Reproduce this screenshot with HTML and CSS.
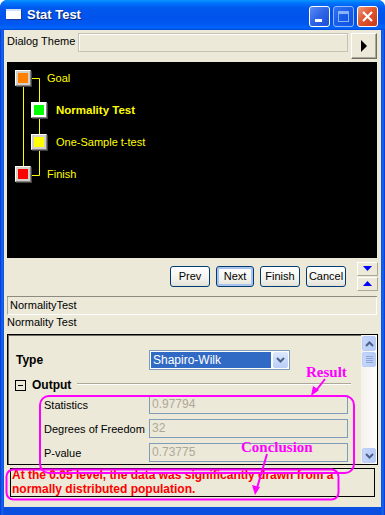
FILE: index.html
```html
<!DOCTYPE html>
<html lang="en">
<head>
    <meta charset="UTF-8">
    <title>Stat Test</title>
    <link rel="stylesheet" href="styles.css">
</head>
<body>
    <div class="window">
        <!-- title bar -->
        <div class="titlebar">
            <span class="app-icon"></span>
            <span class="title">Stat Test</span>
            <div class="caption-btns">
                <span class="cap cap-min"><i></i></span>
                <span class="cap cap-max"><i></i></span>
                <span class="cap cap-close">
                    <svg width="13" height="13" viewBox="0 0 13 13"><path d="M2 2 L11 11 M11 2 L2 11" stroke="#fff" stroke-width="2.2"/></svg>
                </span>
            </div>
        </div>

        <div class="client">
            <div class="theme-row">
                <span class="theme-label">Dialog Theme</span>
                <span class="theme-field"></span>
                <span class="theme-btn">
                    <svg width="8" height="12" viewBox="0 0 8 12"><path d="M1 0 L7 6 L1 12 Z" fill="#000"/></svg>
                </span>
            </div>

            <!-- wizard map -->
            <div class="map">
                <svg class="map-lines" width="370" height="196">
                    <path d="M16.5 24 V104 M24 16.5 H32.5 V40 M32.5 55 V72 M32.5 87 V113.5 H24" stroke="#ffff00" fill="none"/>
                </svg>
                <div class="node" style="left:8px;top:8px"><i class="orange"></i></div>
                <div class="node selected" style="left:24px;top:40px"><i class="green"></i></div>
                <div class="node" style="left:24px;top:72px"><i class="yellow"></i></div>
                <div class="node" style="left:8px;top:104px"><i class="red"></i></div>
                <span class="node-label" style="left:40px;top:9px">Goal</span>
                <span class="node-label bold" style="left:49px;top:41px">Normality Test</span>
                <span class="node-label" style="left:49px;top:73px">One-Sample t-test</span>
                <span class="node-label" style="left:40px;top:105px">Finish</span>
            </div>

            <div class="nav-row">
                <button class="btn">Prev</button>
                <button class="btn focus">Next</button>
                <button class="btn">Finish</button>
                <button class="btn">Cancel</button>
                <div class="spin">
                    <span class="spin-btn"><svg width="9" height="5" viewBox="0 0 9 5"><path d="M0 0 H9 L4.5 5 Z" fill="#0000ff"/></svg></span>
                    <span class="spin-btn"><svg width="9" height="5" viewBox="0 0 9 5"><path d="M0 5 H9 L4.5 0 Z" fill="#0000ff"/></svg></span>
                </div>
            </div>

            <div class="separator"></div>
            <div class="name-field">NormalityTest</div>
            <div class="name-label">Normality Test</div>

            <div class="settings">
                <div class="settings-body">
                    <div class="type-row">
                        <span class="type-label">Type</span>
                        <span class="combo">
                            <span class="combo-value">Shapiro-Wilk</span>
                            <span class="combo-btn">
                                <svg width="9" height="6" viewBox="0 0 9 6"><path d="M1 1 L4.5 4.5 L8 1" stroke="#4d6185" stroke-width="2" fill="none"/></svg>
                            </span>
                        </span>
                    </div>
                    <div class="output-row">
                        <span class="minus-box"></span>
                        <span class="output-label">Output</span>
                        <span class="output-line"></span>
                    </div>
                    <div class="result-row">
                        <span class="result-label">Statistics</span>
                        <span class="result-field">0.97794</span>
                    </div>
                    <div class="result-row">
                        <span class="result-label">Degrees of Freedom</span>
                        <span class="result-field">32</span>
                    </div>
                    <div class="result-row">
                        <span class="result-label">P-value</span>
                        <span class="result-field">0.73775</span>
                    </div>
                </div>
                <div class="scrollbar">
                    <span class="sb-btn">
                        <svg width="9" height="6" viewBox="0 0 9 6"><path d="M1 5 L4.5 1.5 L8 5" stroke="#4d6185" stroke-width="2" fill="none"/></svg>
                    </span>
                    <span class="sb-thumb">
                        <svg width="7" height="7" viewBox="0 0 7 7"><path d="M0 0.5 H7 M0 2.5 H7 M0 4.5 H7 M0 6.5 H7" stroke="#8ea5d8"/></svg>
                    </span>
                    <span class="sb-fill"></span>
                    <span class="sb-btn">
                        <svg width="9" height="6" viewBox="0 0 9 6"><path d="M1 1 L4.5 4.5 L8 1" stroke="#4d6185" stroke-width="2" fill="none"/></svg>
                    </span>
                </div>
            </div>

            <div class="conclusion">At the 0.05 level, the data was significantly drawn from a<br>normally distributed population.</div>

            <!-- annotations drawn over the dialog -->
            <svg class="marks" width="377" height="477">
                <rect x="36" y="366" width="314" height="77" rx="9" fill="none" stroke="#ff00ff" stroke-width="2"/>
                <rect x="2.5" y="439.5" width="332" height="30" rx="7" fill="none" stroke="#ff00ff" stroke-width="2"/>
                <path d="M321 349 L311 362" stroke="#ff00ff" stroke-width="2"/>
                <path d="M307 366 L309 356 L315 360 Z" fill="#ff00ff"/>
                <path d="M263 424 L253 458" stroke="#ff00ff" stroke-width="2"/>
                <path d="M251 465 L248 455 L256 457 Z" fill="#ff00ff"/>
            </svg>
            <span class="note note-result">Result</span>
            <span class="note note-conclusion">Conclusion</span>
        </div>
    </div>
</body>
</html>
```

FILE: styles.css
```css
body {
    margin: 0;
    font-family: "Liberation Sans", Arial, sans-serif;
    font-size: 11px;
    color: #000;
}

.window {
    width: 385px;
    height: 515px;
    background: linear-gradient(to right, #0831d9 0, #166aee 2px, #0a4fe0 4px, #0a4fe0 381px, #166aee 383px, #0831d9 385px);
    border-radius: 7px 7px 0 0;
    display: flex;
    flex-direction: column;
    overflow: hidden;
}

/* title bar */
.titlebar {
    height: 30px;
    flex-shrink: 0;
    display: flex;
    align-items: center;
    padding: 0 7px 0 6px;
    background: linear-gradient(to bottom, #0997ff 0, #0074fd 3px, #0058ee 8px, #0053ec 18px, #0058f0 24px, #0066fc 28px, #0047d6 30px);
    border-radius: 7px 7px 0 0;
}
.app-icon {
    width: 15px;
    height: 8px;
    background: #fff;
    border-top: 2px solid #cfe0ff;
    box-shadow: 1px 1px 0 #1a3f9c;
    margin-top: -2px;
}
.title {
    margin-left: 6px;
    font-size: 13px;
    font-weight: bold;
    color: #fff;
    text-shadow: 1px 1px 0 #0a1f6a;
    margin-top: -1px;
}
.caption-btns {
    margin-left: auto;
    display: flex;
    gap: 3px;
    margin-top: 3px;
}
.cap {
    width: 19px;
    height: 19px;
    border: 1px solid #fff;
    border-radius: 3px;
    display: flex;
    align-items: center;
    justify-content: center;
    background: linear-gradient(135deg, #5d8cf5 0, #2d63e6 50%, #1b4fd6 100%);
    position: relative;
}
.cap-min i {
    position: absolute;
    left: 5px;
    top: 12px;
    width: 7px;
    height: 3px;
    background: #fff;
}
.cap-max {
    opacity: 0.55;
}
.cap-max i {
    width: 9px;
    height: 7px;
    border: 1px solid #fff;
    border-top-width: 3px;
}
.cap-close {
    background: linear-gradient(135deg, #f09a7c 0, #e0572e 45%, #c9361a 100%);
}

/* client area */
.client {
    position: relative;
    flex: 1;
    margin: 0 4px 8px 4px;
    padding: 0 3px;
    background: #ece9d8;
    display: flex;
    flex-direction: column;
}

.theme-row {
    display: flex;
    align-items: flex-start;
    margin-top: 3px;
    height: 26px;
}
.theme-label {
    margin-top: 2px;
    width: 71px;
}
.theme-field {
    width: 268px;
    height: 17px;
    border: 1px solid #c5c2b2;
    box-shadow: inset 1px 1px 0 #fff;
    background: #ece9d8;
}
.theme-btn {
    margin-left: 3px;
    width: 24px;
    height: 24px;
    display: flex;
    align-items: center;
    justify-content: center;
    background: #ece9d8;
    border-top: 1px solid #fff;
    border-left: 1px solid #fff;
    border-right: 1px solid #716f64;
    border-bottom: 1px solid #716f64;
    box-shadow: inset -1px -1px 0 #aca899;
}

/* wizard map */
.map {
    position: relative;
    margin-top: 3px;
    width: 370px;
    height: 196px;
    background: #000;
}
.map-lines {
    position: absolute;
    left: 0;
    top: 0;
}
.node {
    position: absolute;
    width: 14px;
    height: 14px;
    background: #d4d0c8;
    border-top: 1px solid #fff;
    border-left: 1px solid #fff;
    border-right: 1px solid #808080;
    border-bottom: 1px solid #808080;
    box-shadow: 1px 1px 0 #404040;
}
.node.selected {
    background: #fff;
}
.node i {
    position: absolute;
    left: 2px;
    top: 2px;
    width: 10px;
    height: 10px;
}
.orange { background: #ff8000; }
.green { background: #00ff00; }
.yellow { background: #ffff00; }
.red { background: #ff0000; }
.node-label {
    position: absolute;
    color: #ffff00;
    font-size: 11px;
    line-height: 14px;
    white-space: nowrap;
}
.node-label.bold {
    font-weight: bold;
    font-size: 11.5px;
}

/* buttons */
.nav-row {
    display: flex;
    align-items: center;
    justify-content: flex-end;
    gap: 6px;
    margin-top: 4px;
    height: 28px;
}
.btn {
    width: 40px;
    height: 21px;
    padding: 0;
    font-family: "Liberation Sans", Arial, sans-serif;
    font-size: 11px;
    border: 1px solid #003c74;
    border-radius: 3px;
    background: linear-gradient(to bottom, #fff 0, #f4f3ee 60%, #e3e1d6 100%);
    color: #000;
}
.btn:nth-child(2) { width: 38px; }
.btn.focus {
    box-shadow: inset 0 0 0 2px #a9c3ee;
}
.spin {
    display: flex;
    flex-direction: column;
    gap: 1px;
    margin-left: 5px;
    margin-right: 0;
}
.spin-btn {
    width: 19px;
    height: 12px;
    display: flex;
    align-items: center;
    justify-content: center;
    background: #ece9d8;
    border-top: 1px solid #fff;
    border-left: 1px solid #fff;
    border-right: 1px solid #aca899;
    border-bottom: 1px solid #aca899;
}

.separator {
    margin-top: 6px;
    width: 370px;
    height: 1px;
    background: #8d8b80;
}
.name-field {
    width: 366px;
    height: 17px;
    line-height: 17px;
    padding-left: 2px;
    border-left: 1px solid #aca899;
    border-bottom: 1px solid #fff;
    border-right: 1px solid #fff;
    background: #ece9d8;
}
.name-label {
    margin-top: 1px;
    line-height: 13px;
}

/* settings panel */
.settings {
    margin-top: 5px;
    width: 369px;
    height: 129px;
    border: 1px solid #000;
    box-shadow: inset 1px 1px 0 #716f64;
    display: flex;
}
.settings-body {
    flex: 1;
    padding-left: 8px;
}
.type-row {
    display: flex;
    align-items: center;
    margin-top: 15px;
    height: 20px;
}
.type-label {
    width: 133px;
    font-weight: bold;
    font-size: 12px;
}
.combo {
    width: 139px;
    height: 18px;
    border: 1px solid #7f9db9;
    background: #fff;
    display: flex;
    align-items: center;
}
.combo-value {
    flex: 1;
    margin: 0 2px 0 1px;
    height: 16px;
    line-height: 16px;
    padding-left: 2px;
    background: #316ac5;
    color: #fff;
    font-size: 12px;
}
.combo-btn {
    width: 15px;
    height: 16px;
    margin-right: 1px;
    display: flex;
    align-items: center;
    justify-content: center;
    background: linear-gradient(to bottom, #dce8fd, #b9cdf7);
    border-radius: 2px;
}
.output-row {
    display: flex;
    align-items: center;
    margin-top: 9px;
    height: 12px;
}
.minus-box {
    width: 9px;
    height: 9px;
    margin-left: -1px;
    border: 1px solid #000;
    position: relative;
}
.minus-box::after {
    content: "";
    position: absolute;
    left: 2px;
    top: 4px;
    width: 5px;
    height: 1px;
    background: #000;
}
.output-label {
    margin-left: 6px;
    font-weight: bold;
    font-size: 12px;
}
.output-line {
    margin-left: 6px;
    width: 274px;
    height: 1px;
    background: #aca899;
    box-shadow: 0 1px 0 #fff;
    margin-top: -3px;
}
.result-row {
    display: flex;
    align-items: center;
    height: 19px;
    margin-top: 5px;
}
.output-row + .result-row {
    margin-top: 4px;
}
.result-label {
    margin-left: 28px;
    width: 105px;
}
.result-field {
    width: 195px;
    height: 17px;
    line-height: 17px;
    padding-left: 2px;
    border: 1px solid #7f9db9;
    color: #aca899;
    font-size: 12px;
}

.scrollbar {
    width: 16px;
    background: linear-gradient(to right, #f3f1ea, #fefefd);
    display: flex;
    flex-direction: column;
    align-items: center;
    padding-top: 1px;
}
.sb-btn, .sb-thumb {
    width: 13px;
    height: 14px;
    border: 1px solid #b9cdf7;
    border-radius: 2px;
    background: linear-gradient(to right, #c6d6fb, #b6cbf6);
    display: flex;
    align-items: center;
    justify-content: center;
    box-sizing: border-box;
    width: 14px;
    height: 15px;
}
.sb-thumb {
    margin-top: 1px;
}
.sb-fill {
    flex: 1;
}
.scrollbar .sb-btn:last-child {
    margin-bottom: 1px;
}

/* conclusion */
.conclusion {
    margin: 3px 0 0 3px;
    width: 362px;
    height: 27px;
    border: 1px solid #000;
    padding-left: 1px;
    color: #ff0000;
    font-weight: bold;
    font-size: 12px;
    line-height: 13.5px;
    white-space: nowrap;
}

/* annotations */
.marks {
    position: absolute;
    left: 0;
    top: 0;
    pointer-events: none;
}
.note {
    position: absolute;
    color: #ff00ff;
    font-family: "Liberation Serif", "Times New Roman", serif;
    font-weight: bold;
    font-size: 15px;
}
.note-result {
    left: 302px;
    top: 334px;
}
.note-conclusion {
    left: 237px;
    top: 409px;
}
```
